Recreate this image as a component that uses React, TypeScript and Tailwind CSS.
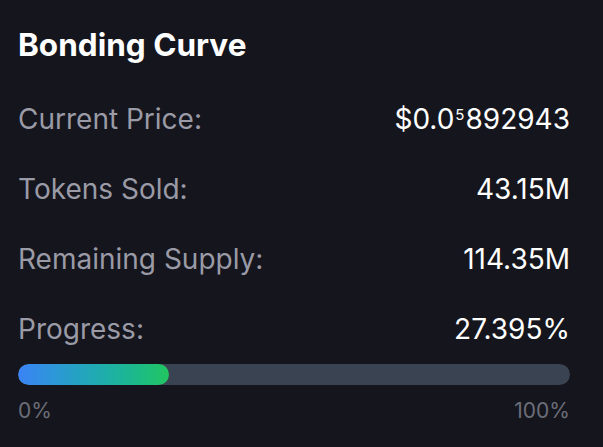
const rows = [
  {
    label: "Current Price:",
    value: (
      <>
        $0.0<sup className="text-[15px] relative top-[-9px] align-baseline px-[1px]">5</sup>892943
      </>
    ),
  },
  { label: "Tokens Sold:", value: "43.15M" },
  { label: "Remaining Supply:", value: "114.35M" },
  { label: "Progress:", value: "27.395%" },
]

export default function App() {
  const progress = 27.395

  return (
    <main
      className="w-[603px] h-[447px] bg-[#15151d] pl-[18px] pr-[33px] pt-[26px]"
      style={{ fontFamily: "Inter, 'Liberation Sans', sans-serif" }}
    >
      <h2 className="text-[31.5px] leading-[38px] font-bold text-white">Bonding Curve</h2>
      <div className="mt-[37px] flex flex-col gap-[34px]">
        {rows.map((row) => (
          <div key={row.label} className="flex justify-between items-baseline text-[28px] leading-[36px]">
            <span className="text-[#9a9ba6]">{row.label}</span>
            <span className="text-white">{row.value}</span>
          </div>
        ))}
      </div>
      <div className="mt-[17px] h-[21px] w-full rounded-full bg-[#3a4352] overflow-hidden">
        <div
          className="h-full rounded-full bg-gradient-to-r from-[#3b82f6] to-[#22c55e]"
          style={{ width: `${progress}%` }}
        />
      </div>
      <div className="mt-[12px] flex justify-between text-[21px] leading-[28px] text-[#6b6e78]">
        <span>0%</span>
        <span>100%</span>
      </div>
    </main>
  )
}
